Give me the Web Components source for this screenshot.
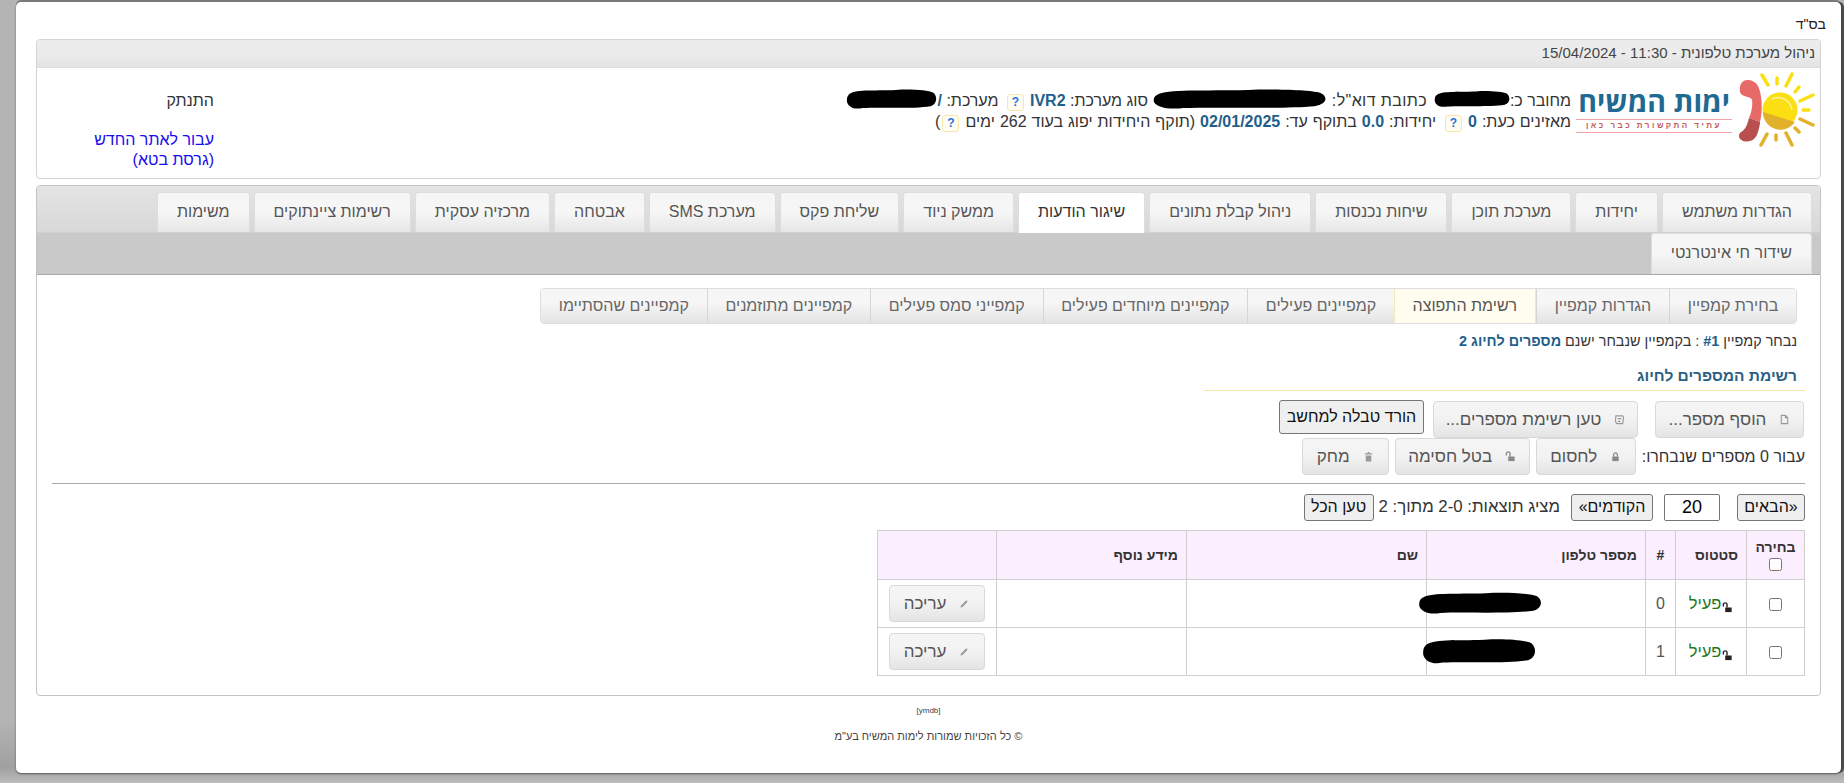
<!DOCTYPE html>
<html lang="he" dir="rtl">
<head>
<meta charset="utf-8">
<title>ניהול מערכת טלפונית</title>
<style>
  html, body { margin: 0; height: 783px; overflow: hidden; }
  body {
    background: linear-gradient(#b4b4b4 92%, #a0a0a0 98%, #bcbcbc);
    font: 16px "Liberation Sans", Arial, sans-serif;
    color: #333;
  }
</style>
</head>
<body>
<app-window>
  <page-header></page-header>
  <main-tabs>
    <campaign-page></campaign-page>
  </main-tabs>
  <page-footer></page-footer>
</app-window>

<script>
// האייקונים הקטנים של הכפתורים
const KEY = '<path d="M1.500 5V3a2 2 0 0 1 4 0v3" fill="none" stroke="COLOR" stroke-width="1.500"/><path d="M3.500 6h7v5h-7z" fill="COLOR"/>';
const ICONS = {
  file: '<path d="M2.500 1.500h4.500l2.500 2.500v6.500h-7z M7 1.500v2.500h2.500" fill="none" stroke="#999" stroke-width="1.200"/>',
  load: '<path d="M2 2h7.500l1 2-1 6.500H3L1.500 8z M4 5h4 M4 8h3" fill="none" stroke="#999" stroke-width="1.200"/>',
  lock: '<path d="M4 6V4a2 2 0 0 1 4 0v2" fill="none" stroke="#888" stroke-width="1.300"/><path d="M2.500 6h7v5h-7z" fill="#888"/>',
  unlock: KEY.replace(/COLOR/g, '#888'),
  trash: '<path d="M2 2.500h8v1.300H2z M5 1h2v1.500H5z M3 5h6v6.500H3z" fill="#999"/>',
  pencil: '<path d="M1.500 10.500 2.500 8l5.500-5.500 1.500 1.500-5.500 5.500z" fill="#999"/>'
};

class IconButton extends HTMLElement {
  connectedCallback() {
    this.attachShadow({ mode: 'open' });
    const icon = this.getAttribute('icon');
    this.shadowRoot.innerHTML = `
      <style>
        :host { display: inline-block; }
        button {
          display: flex; align-items: center; justify-content: center; gap: 13px;
          box-sizing: border-box;
          height: 37px; width: var(--w, auto);
          padding: 0;
          border: 1px solid #d8d8d8; border-radius: 4px;
          background: linear-gradient(#f6f6f6 0%, #f2f2f2 50%, #e4e4e4 100%);
          color: #555; font: 17px "Liberation Sans", Arial, sans-serif;
          direction: rtl;
        }
        svg { width: 11px; height: 11px; flex: none; }
      </style>
      <button><svg viewBox="0 0 12 12">${ICONS[icon] || ''}</svg><span><slot></slot></span></button>`;
  }
}
customElements.define('icon-button', IconButton);

// כפתור פשוט של הדפדפן
class PlainButton extends HTMLElement {
  connectedCallback() {
    this.attachShadow({ mode: 'open' });
    this.shadowRoot.innerHTML = `
      <style>
        :host { display: inline-block; }
        button {
          box-sizing: border-box; height: var(--h, 27px); width: var(--w, auto); padding: 0;
          border: 1px solid #767676; border-radius: 3px; background: #efefef;
          color: #111; font: 16px "Liberation Sans", Arial, sans-serif; direction: rtl;
        }
      </style>
      <button><slot></slot></button>`;
  }
}
customElements.define('plain-button', PlainButton);

// הסימון השחור שמסתיר פרטים
class RedactMark extends HTMLElement {
  connectedCallback() {
    this.attachShadow({ mode: 'open' });
    const w = this.getAttribute('w') || 80;
    const h = this.getAttribute('h') || 22;
    this.shadowRoot.innerHTML = `
      <style>
        :host { display: inline-block; position: relative; width: ${w}px; height: 1em; vertical-align: baseline; }
        svg { position: absolute; left: 0; top: 50%; margin-top: ${-h / 2}px; display: block; }
      </style>
      <svg width="${w}" height="${h}" viewBox="0 0 100 24" preserveAspectRatio="none">
        <path d="M3 8C8 2 30 4 55 3 70 2 90 3 96 6c5 4 4 12-3 14-20 3-55 1-75 2C8 24 2 20 1 15 1 12 1 10 3 8z" fill="#000"/>
      </svg>`;
  }
}
customElements.define('redact-mark', RedactMark);

class HelpBadge extends HTMLElement {
  connectedCallback() {
    this.attachShadow({ mode: 'open' });
    this.shadowRoot.innerHTML = `
      <style>
        :host {
          display: inline-block; box-sizing: border-box; width: 17px; height: 17px;
          margin: 0 6px 0 4px; vertical-align: 0;
          border: 1px solid #f6e7b0; border-radius: 3px; background: #fffdf2;
          color: #2b72d8; font: bold 12px/15px "Liberation Sans", Arial, sans-serif; text-align: center;
        }
      </style>?`;
  }
}
customElements.define('help-badge', HelpBadge);

class AppWindow extends HTMLElement {
  connectedCallback() {
    this.attachShadow({ mode: 'open' });
    this.shadowRoot.innerHTML = `
      <style>
        :host {
          display: block; box-sizing: border-box;
          width: 1825px; height: 771px; margin: 2px 3px 0 16px;
          padding: 13px 20px 0 20px;
          background: #fff; border-radius: 5px;
          box-shadow: 3px 0 0 #4a4a4a, 0 -2px 0 #7a7a7a, 0 1px 2px rgba(0,0,0,.5);
        }
        .bsd { height: 24px; margin-right: -5px; font-size: 14px; line-height: 18px; color: #222; }
      </style>
      <div class="bsd">בס"ד</div>
      <slot></slot>`;
  }
}
customElements.define('app-window', AppWindow);

class PageHeader extends HTMLElement {
  connectedCallback() {
    this.attachShadow({ mode: 'open' });
    this.shadowRoot.innerHTML = `
      <style>
        :host {
          display: block; box-sizing: border-box; height: 140px;
          border: 1px solid #d4d4d4; border-radius: 4px; overflow: hidden;
        }
        .title {
          box-sizing: border-box; height: 28px; padding: 4px 5px 0 0;
          background: linear-gradient(#ececec 50%, #e3e3e3 100%);
          border-bottom: 1px solid #ddd;
          font: 15px/18px "Liberation Sans", Arial, sans-serif; color: #444;
        }
        .body { display: flex; align-items: flex-start; height: 110px; }
        .logo { flex: none; width: 245px; height: 96px; margin-top: 4px; position: relative; }
        .logo svg { display: block; }
        .logo b {
          position: absolute; right: 90px; top: 12px; color: #1f6a93;
          font: bold 28.500px/34px "Open Sans", "Liberation Sans", sans-serif; white-space: nowrap;
        }
        .logo i {
          position: absolute; right: 88px; top: 47px; width: 156px; box-sizing: border-box;
          border-top: 1px solid #f3a3a3; border-bottom: 1px solid #f3a3a3;
          color: #c25a5a; font: bold 8px/12px "Liberation Sans", sans-serif;
          letter-spacing: 2.500px; text-align: center; white-space: nowrap;
        }
        .info { flex: 1; padding: 22px 4px 0 0; font-size: 16px; line-height: 21px; color: #333; white-space: nowrap; }
        .info strong { color: #1f5f8b; font-weight: bold; }
        .info .wide { letter-spacing: .4px; }
        .info .second { word-spacing: .5px; }
        .info .second help-badge:last-of-type { margin-left: 2px; }
        .links { flex: none; width: 177px; padding-top: 23px; font-size: 16px; line-height: 20px; }
        .links a { color: #1a0dee; text-decoration: none; display: block; }
        .links .out { color: #333; margin-bottom: 19px; }
      </style>
      <div class="title">ניהול מערכת טלפונית - 11:30 - 15/04/2024</div>
      <div class="body">
        <div class="logo">
          <svg width="245" height="96" viewBox="0 0 245 96">
            <g fill="none" stroke-linecap="round">
              <g stroke="#fbdf12" stroke-width="3.500">
                <path d="M187 3 193 13M217 2 211 14M238 23 225 29"/>
                <path d="M202 6V12M224 15 220 20M234 38H228"/>
              </g>
              <g stroke="#e2b12b" stroke-width="3.500">
                <path d="M238 53 225 47M217 73 211 61M186 73 192 62"/>
                <path d="M224 60 220 56M201 68V63"/>
              </g>
            </g>
            <circle cx="205" cy="38" r="17.500" fill="#fbdf12"/>
            <path d="M188 40 220 50A17.500 17.500 0 0 1 188 40Z" fill="#e2b12b"/>
            <path d="M197 27A14 14 0 0 1 217 38" fill="none" stroke="#fff3a0" stroke-width="1.500"/>
            <path d="M172 8C165 8 163 18 166 22 170 26 176 24 177 28 178 34 176 42 174 46L185 50C188 38 187 22 183 14 180 9 176 8 172 8Z" fill="#e86a68"/>
            <path d="M174 46C172 54 170 58 166 60 163 62 163 67 168 69 176 71 181 67 183 60 184 56 185 53 185 50Z" fill="#b84e4e"/>
          </svg>
          <b>ימות המשיח</b>
          <i>עתיד התקשורת כבר כאן</i>
        </div>
        <div class="info">
          <div>מחובר כ: <redact-mark w="76" h="19" style="margin:0 -5px 0 3px"></redact-mark> <span class="wide">כתובת דוא"ל:</span> <redact-mark w="175" h="23"></redact-mark> סוג מערכת: <strong>IVR2</strong><help-badge></help-badge> מערכת: <strong>/</strong><redact-mark w="91" h="23"></redact-mark></div>
          <div class="second">מאזינים כעת: <strong>0</strong><help-badge></help-badge> יחידות: <strong>0.0</strong> בתוקף עד: <strong>02/01/2025</strong> (תוקף היחידות יפוג בעוד 262 ימים<help-badge></help-badge>)</div>
        </div>
        <div class="links">
          <a class="out">התנתק</a>
          <a>עבור לאתר החדש<br>(גרסת בטא)</a>
        </div>
      </div>`;
  }
}
customElements.define('page-header', PageHeader);

class MainTabs extends HTMLElement {
  connectedCallback() {
    this.attachShadow({ mode: 'open' });
    const tabs = ['הגדרות משתמש','יחידות','מערכת תוכן','שיחות נכנסות','ניהול קבלת נתונים','שיגור הודעות','ממשק ניוד','שליחת פקס','מערכת SMS','אבטחה','מרכזיה עסקית','רשימות ציינתוקים','משימות','שידור חי אינטרנטי'];
    this.shadowRoot.innerHTML = `
      <style>
        :host {
          display: block; box-sizing: border-box; height: 511px; margin-top: 6px;
          border: 1px solid #c4c4c4; border-radius: 4px; overflow: hidden;
        }
        .strip {
          display: flex; flex-wrap: wrap; gap: 1px 4px; align-content: flex-start; box-sizing: border-box;
          height: 89px; padding: 6px 8px 0 100px;
          background: linear-gradient(#e4e4e4, #d8d8d8 46px, #c9c9c9 47px);
          border-bottom: 1px solid #aaa;
        }
        .tab {
          box-sizing: border-box; height: 40px; padding: 0 19px;
          border: 1px solid #ddd; border-bottom: 0; border-radius: 3px 3px 0 0;
          background: linear-gradient(#f6f6f6 50%, #e6e6e6 100%);
          color: #555; font-size: 16px; line-height: 38px; white-space: nowrap;
        }
        .tab.on { background: #fff; color: #333; height: 41px; margin-bottom: -1px; }
        .tab.alone { height: 41px; }
      </style>
      <div class="strip">${tabs.map(t => `<div class="tab${t === 'שיגור הודעות' ? ' on' : ''}${t === 'שידור חי אינטרנטי' ? ' alone' : ''}">${t}</div>`).join('')}</div>
      <slot></slot>`;
  }
}
customElements.define('main-tabs', MainTabs);

class CampaignPage extends HTMLElement {
  connectedCallback() {
    this.attachShadow({ mode: 'open' });
    const subs = ['בחירת קמפיין','הגדרות קמפיין','רשימת התפוצה','קמפיינים פעילים','קמפיינים מיוחדים פעילים','קמפייני סמס פעילים','קמפיינים מתוזמנים','קמפיינים שהסתיימו'];
    this.shadowRoot.innerHTML = `
      <style>
        :host { display: block; padding: 13px 15px 0 15px; }
        .subs { display: flex; width: fit-content; margin-right: 8px; border: 1px solid #ddd; border-radius: 4px; overflow: hidden; }
        .subs div {
          box-sizing: border-box; height: 34px; padding: 0 17.750px; line-height: 33px; font-size: 16px; color: #666; white-space: nowrap;
          background: linear-gradient(#f6f6f6 40%, #e4e4e4 100%);
          border-left: 1px solid #d6d6d6;
        }
        .subs div:last-child { border-left: 0; }
        .subs .on { background: #fffdf0; color: #555; border-left: 1px solid #f3e9b5; border-right: 1px solid #f3e9b5; }
        .note { margin: 9px 8px 0 0; font-size: 14.400px; line-height: 17px; color: #333; }
        .note b { color: #1f5f8b; }
        h3 { width: 601px; box-sizing: border-box; margin: 18px 0 0; padding: 0 8px 6px 0; border-bottom: 1px solid #efe9a8; font: bold 15.500px/16px "Liberation Sans", Arial, sans-serif; color: #2b5f85; }
        .row { display: flex; align-items: flex-start; }
        .row.first { margin: 10px 1px 0 0; height: 37px; }
        .row.first icon-button:nth-child(2) { margin-right: 17px; }
        .row.first plain-button { --h: 34px; --w: 145px; margin-top: -1px; margin-right: 9px; }
        .row.second { height: 37px; gap: 6px; align-items: center; font-size: 16px; white-space: nowrap; }
        hr { border: 0; border-top: 1px solid #aaa; margin: 8px 0 0; }
        .pager { display: flex; align-items: center; height: 28px; margin-top: 9px; font-size: 16.800px; white-space: nowrap; }
        .pager input { box-sizing: border-box; width: 56px; height: 27px; margin: 0 17px 0 11px; border: 1px solid #767676; border-radius: 2px; font: 18px "Liberation Sans", Arial, sans-serif; text-align: center; direction: ltr; padding: 0; }
        .pager span { margin: 0 11px 0 5px; }
        table { width: 927px; margin-top: 9px; border-collapse: collapse; table-layout: fixed; font-size: 14px; }
        th, td { border: 1px solid #cfcfcf; padding: 0 8px; text-align: right; height: 48px; box-sizing: border-box; }
        th { background: #fbeefe; height: 49px; color: #333; font-weight: bold; }
        .c { text-align: center; padding: 0; }
        td.num { font-size: 16px; color: #555; }
        input[type=checkbox] { width: 13px; height: 13px; margin: 0; vertical-align: middle; }
        th.pick { line-height: 16px; }
        .active { color: #1c7a1c; font-size: 16.500px; }
        .key { width: 11px; height: 11px; vertical-align: -4px; margin-left: 1px; }
        redact-mark.r0 { margin-right: 95px; }
        redact-mark.r1 { margin-right: 101px; }
      </style>
      <div class="subs">${subs.map(s => `<div${s === 'רשימת התפוצה' ? ' class="on"' : ''}>${s}</div>`).join('')}</div>
      <div class="note">נבחר קמפיין <b>#1</b> : בקמפיין שנבחר ישנם <b>מספרים לחיוג 2</b></div>
      <h3>רשימת המספרים לחיוג</h3>
      <div class="row first">
        <icon-button icon="file" style="--w:149px">הוסף מספר...</icon-button>
        <icon-button icon="load" style="--w:205px">טען רשימת מספרים...</icon-button>
        <plain-button>הורד טבלה למחשב</plain-button>
      </div>
      <div class="row second">
        <span>עבור 0 מספרים שנבחרו:</span>
        <icon-button icon="lock" style="--w:100px">לחסום</icon-button>
        <icon-button icon="unlock" style="--w:135px">בטל חסימה</icon-button>
        <icon-button icon="trash" style="--w:87px">מחק</icon-button>
      </div>
      <hr>
      <div class="pager">
        <plain-button style="--w:68px">«הבאים</plain-button>
        <input value="20">
        <plain-button style="--w:82px">הקודמים»</plain-button>
        <span>מציג תוצאות: 2-0 מתוך: 2</span>
        <plain-button style="--w:70px">טען הכל</plain-button>
      </div>
      <table>
        <colgroup><col style="width:58px"><col style="width:71px"><col style="width:30px"><col style="width:219px"><col style="width:240px"><col style="width:190px"><col style="width:119px"></colgroup>
        <tr><th class="c pick">בחירה<br><input type="checkbox"></th><th>סטטוס</th><th class="c">#</th><th>מספר טלפון</th><th>שם</th><th>מידע נוסף</th><th></th></tr>
        ${[0, 1].map(i => `<tr>
          <td class="c"><input type="checkbox"></td>
          <td class="c"><svg class="key" viewBox="0 0 12 12">${KEY.replace(/COLOR/g, '#222')}</svg><span class="active">פעיל</span></td>
          <td class="c num">${i}</td>
          <td><redact-mark class="r${i}" w="${i ? 114 : 124}" h="${i ? 29 : 25}"></redact-mark></td>
          <td></td><td></td>
          <td class="c"><icon-button icon="pencil" style="--w:96px">עריכה</icon-button></td>
        </tr>`).join('')}
      </table>`;
  }
}
customElements.define('campaign-page', CampaignPage);

class PageFooter extends HTMLElement {
  connectedCallback() {
    this.attachShadow({ mode: 'open' });
    this.shadowRoot.innerHTML = `
      <style>
        :host { display: block; width: 300px; margin: 10px auto 0; text-align: center; color: #444; }
        .tag { font-size: 8px; line-height: 10px; }
        .copy { margin-top: 13px; font-size: 11px; line-height: 14px; }
      </style>
      <div class="tag">[ymdb]</div>
      <div class="copy">© כל הזכויות שמורות לימות המשיח בע"מ</div>`;
  }
}
customElements.define('page-footer', PageFooter);
</script>
</body>
</html>
